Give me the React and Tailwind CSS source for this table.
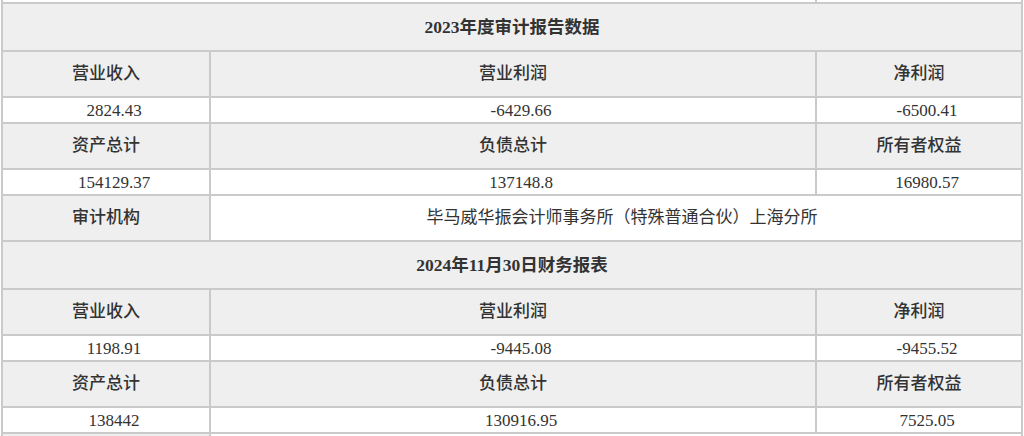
const FONT = {
  fontFamily: '"Liberation Serif", "Noto Sans CJK SC", serif',
};

const SECTIONS = [
  {
    title: '2023年度审计报告数据',
    rows: [
      ['营业收入', '营业利润', '净利润'],
      ['2824.43', '-6429.66', '-6500.41'],
      ['资产总计', '负债总计', '所有者权益'],
      ['154129.37', '137148.8', '16980.57'],
    ],
    auditor: '毕马威华振会计师事务所（特殊普通合伙）上海分所',
  },
  {
    title: '2024年11月30日财务报表',
    rows: [
      ['营业收入', '营业利润', '净利润'],
      ['1198.91', '-9445.08', '-9455.52'],
      ['资产总计', '负债总计', '所有者权益'],
      ['138442', '130916.95', '7525.05'],
    ],
  },
];

const cellBase = 'border-2 border-[#cacaca] text-center align-middle p-0';

function LabelRow({ cells }) {
  return (
    <tr className="h-[46px]">
      {cells.map((c) => (
        <td key={c} className={`${cellBase} bg-[#efefef] font-medium`}>
          {c}
        </td>
      ))}
    </tr>
  );
}

function ValueRow({ cells }) {
  return (
    <tr className="h-[26px]">
      {cells.map((c, i) => (
        <td key={i} className={`${cellBase} bg-white pl-4 leading-none`}>
          {c}
        </td>
      ))}
    </tr>
  );
}

function SectionRows({ section }) {
  return (
    <>
      <tr className="h-[48px]">
        <td colSpan={3} className={`${cellBase} bg-[#efefef] font-bold text-[17.5px]`}>
          {section.title}
        </td>
      </tr>
      <LabelRow cells={section.rows[0]} />
      <ValueRow cells={section.rows[1]} />
      <LabelRow cells={section.rows[2]} />
      <ValueRow cells={section.rows[3]} />
      {section.auditor ? (
        <tr className="h-[46px]">
          <td className={`${cellBase} bg-[#efefef] font-medium`}>审计机构</td>
          <td colSpan={2} className={`${cellBase} bg-white pl-3`}>
            {section.auditor}
          </td>
        </tr>
      ) : null}
    </>
  );
}

export default function App() {
  return (
    <div className="w-[1024px] h-[436px] overflow-hidden bg-white" style={FONT}>
      <table className="table-fixed border-collapse w-[1020px] ml-px -mt-[6px] text-[17px] text-[#333]">
        <colgroup>
          <col className="w-[208px]" />
          <col className="w-[606px]" />
          <col className="w-[206px]" />
        </colgroup>
        <tbody>
          <tr className="h-[8px]">
            <td colSpan={2} className={`${cellBase} bg-white`} />
            <td className={`${cellBase} bg-white`} />
          </tr>
          {SECTIONS.map((s) => (
            <SectionRows key={s.title} section={s} />
          ))}
          <tr className="h-[30px]">
            <td className={`${cellBase} bg-[#efefef]`} />
            <td colSpan={2} className={`${cellBase} bg-white`} />
          </tr>
        </tbody>
      </table>
    </div>
  );
}
